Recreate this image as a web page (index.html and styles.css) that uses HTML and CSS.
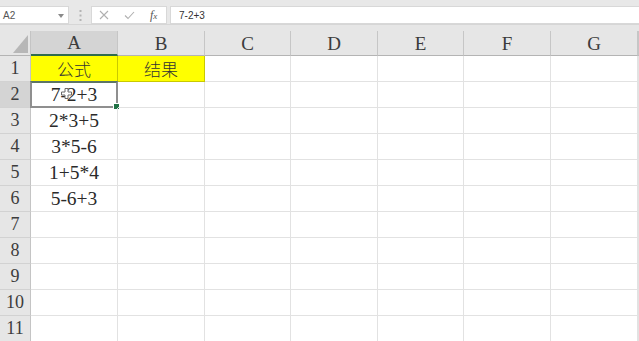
FILE: index.html
```html
<!DOCTYPE html>
<html lang="zh">
<head>
<meta charset="utf-8">
<title>Excel</title>
<link rel="stylesheet" href="styles.css">
</head>
<body>
<div class="topbar">
  <div class="namebox">
    <span class="nb-text">A2</span>
    <svg class="nb-arrow" width="6" height="4" viewBox="0 0 6 4"><path d="M0 0H6L3 4Z" fill="#8a8a8a"/></svg>
  </div>
  <div class="vdots">
    <svg width="3" height="11" viewBox="0 0 3 11"><rect x="0.5" y="0" width="2" height="2" fill="#b4b4b4"/><rect x="0.5" y="4.5" width="2" height="2" fill="#b4b4b4"/><rect x="0.5" y="9" width="2" height="2" fill="#b4b4b4"/></svg>
  </div>
  <div class="fbtns">
    <svg class="ic" width="10" height="10" viewBox="0 0 10 10"><path d="M1 1L9 9M9 1L1 9" stroke="#b0b0b0" stroke-width="1.1" fill="none"/></svg>
    <svg class="ic" width="11" height="9" viewBox="0 0 11 9"><path d="M1 4.5L4 7.5L10 1" stroke="#b0b0b0" stroke-width="1.1" fill="none"/></svg>
    <span class="fx">f<span class="fx-x">x</span></span>
  </div>
  <div class="formula">7-2+3</div>
</div>
<div class="strip"></div>
<div class="grid">
  <div class="corner"><svg class="tri" width="15" height="18" viewBox="0 0 15 18"><path d="M15 0V18H0Z" fill="#b7b7b7"/></svg></div>
  <div class="ch sel-col">A</div>
  <div class="ch">B</div>
  <div class="ch">C</div>
  <div class="ch">D</div>
  <div class="ch">E</div>
  <div class="ch">F</div>
  <div class="ch">G</div>
  <div class="ch"></div>

  <div class="rh">1</div>
  <div class="c yellow cjk">公式</div>
  <div class="c yellow cjk">结果</div>
  <div class="c"></div><div class="c"></div><div class="c"></div><div class="c"></div><div class="c"></div><div class="c"></div>

  <div class="rh sel-row">2</div>
  <div class="c active">7-2+3
    <div class="selbox"><span class="handle"></span></div>
    <svg class="cursor" width="11" height="11" viewBox="0 0 11 11"><path d="M4 0.5H7V4H10.5V7H7V10.5H4V7H0.5V4H4Z" fill="#fff" stroke="#6a6a6a" stroke-width="1"/></svg>
  </div>
  <div class="c"></div><div class="c"></div><div class="c"></div><div class="c"></div><div class="c"></div><div class="c"></div><div class="c"></div>

  <div class="rh">3</div>
  <div class="c">2*3+5</div>
  <div class="c"></div><div class="c"></div><div class="c"></div><div class="c"></div><div class="c"></div><div class="c"></div><div class="c"></div>

  <div class="rh">4</div>
  <div class="c">3*5-6</div>
  <div class="c"></div><div class="c"></div><div class="c"></div><div class="c"></div><div class="c"></div><div class="c"></div><div class="c"></div>

  <div class="rh">5</div>
  <div class="c">1+5*4</div>
  <div class="c"></div><div class="c"></div><div class="c"></div><div class="c"></div><div class="c"></div><div class="c"></div><div class="c"></div>

  <div class="rh">6</div>
  <div class="c">5-6+3</div>
  <div class="c"></div><div class="c"></div><div class="c"></div><div class="c"></div><div class="c"></div><div class="c"></div><div class="c"></div>

  <div class="rh">7</div>
  <div class="c"></div><div class="c"></div><div class="c"></div><div class="c"></div><div class="c"></div><div class="c"></div><div class="c"></div><div class="c"></div>

  <div class="rh">8</div>
  <div class="c"></div><div class="c"></div><div class="c"></div><div class="c"></div><div class="c"></div><div class="c"></div><div class="c"></div><div class="c"></div>

  <div class="rh">9</div>
  <div class="c"></div><div class="c"></div><div class="c"></div><div class="c"></div><div class="c"></div><div class="c"></div><div class="c"></div><div class="c"></div>

  <div class="rh">10</div>
  <div class="c"></div><div class="c"></div><div class="c"></div><div class="c"></div><div class="c"></div><div class="c"></div><div class="c"></div><div class="c"></div>

  <div class="rh">11</div>
  <div class="c"></div><div class="c"></div><div class="c"></div><div class="c"></div><div class="c"></div><div class="c"></div><div class="c"></div><div class="c"></div>
</div>
</body>
</html>
```

FILE: styles.css
```css
* { box-sizing: border-box; }
html, body {
  margin: 0;
  padding: 0;
  background: #ffffff;
  overflow: hidden;
  width: 639px;
  height: 341px;
}

.topbar {
  height: 24px;
  background: #e8e8e8;
  display: flex;
  align-items: flex-start;
  padding-top: 6px;
  font-family: "Liberation Sans", Arial, sans-serif;
  font-size: 10px;
  color: #444;
}
.namebox {
  width: 69px;
  height: 18px;
  background: #fff;
  border: 1px solid #d8d8d8;
  border-left: none;
  display: flex;
  align-items: center;
  justify-content: space-between;
  padding: 0 4px 0 3px;
}
.nb-text { color: #555; }
.nb-arrow { margin-top: 1px; }
.vdots {
  width: 22px;
  height: 18px;
  display: flex;
  align-items: center;
  justify-content: center;
}
.fbtns {
  width: 76px;
  height: 18px;
  background: #fff;
  border: 1px solid #d8d8d8;
  display: flex;
  align-items: center;
  padding-left: 7px;
  gap: 15px;
}
.fx {
  font-family: "Liberation Serif", serif;
  font-style: italic;
  font-size: 12px;
  color: #555;
  margin-left: 0;
}
.fx-x { font-size: 9px; }
.formula {
  flex: 1;
  margin-left: 3px;
  height: 18px;
  background: #fff;
  border: 1px solid #d8d8d8;
  border-right: none;
  display: flex;
  align-items: center;
  padding-left: 8px;
  color: #333;
}

.strip {
  height: 7px;
  background: #e6e6e6;
  border-top: 1px solid #d6d6d6;
}

.grid {
  display: grid;
  grid-template-columns: 31px 87px 87px 86px 87px 86px 87px 87px 1fr;
  grid-template-rows: 25px repeat(11, 26px);
}

.corner {
  background: #e6e6e6;
  border-right: 1px solid #c4c4c4;
  border-bottom: 1px solid #b4b4b4;
  display: flex;
  align-items: flex-end;
  justify-content: flex-end;
  padding: 0 2px 2px 0;
}

.ch {
  background: #e6e6e6;
  border-right: 1px solid #c6c6c6;
  border-bottom: 1px solid #b4b4b4;
  display: flex;
  align-items: center;
  justify-content: center;
  font-family: "Liberation Serif", serif;
  font-size: 19px;
  color: #3c3c3c;
  padding-top: 1px;
}
.ch.sel-col {
  background: #d4d4d4;
  border-bottom: 2px solid #2f6b4d;
}

.rh {
  background: #e6e6e6;
  border-right: 1px solid #c4c4c4;
  border-bottom: 1px solid #d2d2d2;
  display: flex;
  align-items: center;
  justify-content: center;
  font-family: "Liberation Serif", serif;
  font-size: 18px;
  color: #3c3c3c;
}
.rh.sel-row {
  background: #d4d4d4;
}

.c {
  position: relative;
  border-right: 1px solid #e2e2e2;
  border-bottom: 1px solid #e2e2e2;
  display: flex;
  align-items: center;
  justify-content: center;
  font-family: "Liberation Serif", serif;
  font-size: 19.5px;
  color: #2a2a2a;
  white-space: nowrap;
}
.c.yellow {
  background: #ffff00;
  border-right-color: #c9c900;
  border-bottom-color: #c9c900;
}
.c.cjk {
  font-family: "Noto Sans CJK SC", sans-serif;
  font-weight: 300;
  font-size: 17px;
  color: #333;
}

.selbox {
  position: absolute;
  left: -1px;
  top: -1px;
  right: -1px;
  bottom: -1px;
  border: 2px solid #8f8f8f;
  border-top-color: #5d7566;
  pointer-events: none;
}
.handle {
  position: absolute;
  right: -4px;
  bottom: -4px;
  width: 5px;
  height: 5px;
  background: #217346;
  border: 1px solid #fff;
  box-sizing: content-box;
}
.cursor {
  position: absolute;
  left: 30px;
  top: 6px;
}
```
